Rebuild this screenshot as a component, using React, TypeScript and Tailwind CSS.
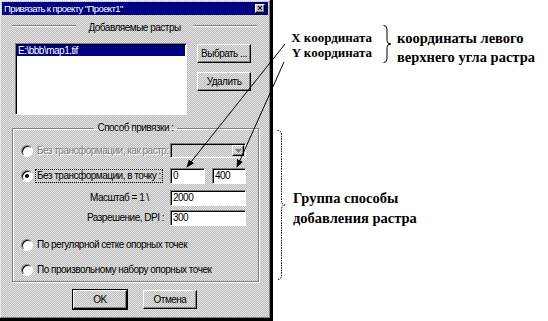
import React from 'react';

const field =
  'bg-white border border-t-[#808080] border-l-[#808080] border-r-white border-b-white shadow-[inset_1px_1px_0_#000]';
const raised =
  'border border-t-white border-l-white border-r-black border-b-black shadow-[inset_-1px_-1px_0_#808080]';
const dither =
  'bg-[#d0d0d0] bg-[repeating-conic-gradient(#bcbcbc_0%_25%,#e4e4e4_0%_50%)] bg-[length:2px_2px]';
const ui = 'text-[10px] tracking-[-0.5px]';

function Radio({ checked = false }: { checked?: boolean }) {
  return (
    <span className="w-[12px] h-[12px] rounded-full shrink-0 bg-white border border-t-[#808080] border-l-[#808080] border-r-white border-b-white shadow-[inset_1px_1px_0_#000] flex items-center justify-center">
      {checked && <span className="w-[4px] h-[4px] rounded-full bg-black" />}
    </span>
  );
}

function Button({ label, isDefault }: { label: string; isDefault?: boolean }) {
  return (
    <div className={`w-[54px] h-[19px] ${isDefault ? 'outline outline-1 outline-black' : ''}`}>
      <div className={`h-full ${raised} ${dither} flex items-center justify-center ${ui} leading-none text-black`}>
        {label}
      </div>
    </div>
  );
}

function Dialog() {
  return (
    <div className="w-[273px] h-[321px] shrink-0 border-r-[3px] border-b-[3px] border-black">
      <div className={`h-full border border-t-[#e8e8e8] border-l-[#e8e8e8] border-r-[#808080] border-b-[#808080] p-[1px] ${dither}`}>
        {/* title bar */}
        <div className="h-[13px] bg-[#000080] flex items-center justify-between pl-[2px] pr-[3px]">
          <span className="text-white text-[9.5px] tracking-[-0.6px] leading-none">Привязать к проекту "Проект1"</span>
          <span className={`w-[10px] h-[9px] ${raised} bg-[#c8c8c8] flex items-center justify-center text-[9px] leading-none font-bold text-black`}>
            ×
          </span>
        </div>

        {/* rasters header */}
        <div className="mt-[7px] h-[12px] flex items-start pl-[10px] pr-[11px] gap-[12px]">
          <div className="flex-1 mt-[3px] border-t border-t-[#808080] border-b border-b-white" />
          <span className={`${ui} leading-[12px] text-black`}>Добавляемые растры</span>
          <div className="flex-1 mt-[3px] border-t border-t-[#808080] border-b border-b-white" />
        </div>

        {/* list + buttons */}
        <div className="mt-[9px] flex pl-[13px]">
          <div className={`w-[172px] h-[72px] ${field} p-[1px]`}>
            <div className={`h-[11px] bg-[#000080] text-white ${ui} leading-[11px] pl-[1px]`}>
              {'E:\\bbb\\map1.tif'}
            </div>
          </div>
          <div className="ml-[10px] flex flex-col gap-[9px] pt-[1px]">
            <Button label="Выбрать ..." />
            <Button label="Удалить" />
          </div>
        </div>

        {/* group */}
        <fieldset className="mt-[7px] ml-[10px] w-[247px] border border-[#808080] shadow-[1px_1px_0_#fff,inset_1px_1px_0_#fff] pb-[5px]">
          <legend className={`mx-auto px-[3px] ${ui} leading-[12px] text-black`}>Способ привязки :</legend>

          <div className="mt-[9px] flex items-center">
            <div className="w-[157px] flex items-center pl-[8px] gap-[4px]">
              <Radio />
              <span className={`${ui} leading-none text-[#808080] [text-shadow:1px_1px_0_#fff] whitespace-nowrap`}>
                Без трансформации, как растр:
              </span>
            </div>
            <div className={`w-[76px] h-[15px] border border-t-[#808080] border-l-[#808080] border-r-white border-b-white shadow-[inset_1px_1px_0_#000] ${dither} flex justify-end p-[1px]`}>
              <div className={`w-[12px] h-full ${raised} ${dither} flex items-center justify-center`}>
                <svg width="7" height="4" viewBox="0 0 7 4">
                  <path d="M0 0h7L3.5 4z" fill="#808080" />
                </svg>
              </div>
            </div>
          </div>

          <div className="mt-[10px] flex items-center">
            <div className="w-[157px] flex items-center pl-[8px] gap-[3px]">
              <Radio checked />
              <span className={`${ui} leading-[12px] text-black whitespace-nowrap outline outline-1 outline-dotted outline-black px-[1px]`}>
                Без трансформации, в точку :
              </span>
            </div>
            <div className={`w-[35px] h-[16px] ${field} ${ui} leading-[14px] pl-[2px]`}>0</div>
            <div className={`ml-[7px] w-[34px] h-[16px] ${field} ${ui} leading-[14px] pl-[2px]`}>400</div>
          </div>

          <div className="mt-[6px] flex items-center">
            <div className={`w-[157px] pl-[77px] ${ui} leading-none text-black whitespace-nowrap`}>{'Масштаб = 1 \\'}</div>
            <div className={`w-[76px] h-[16px] ${field} ${ui} leading-[14px] pl-[2px]`}>2000</div>
          </div>

          <div className="mt-[4px] flex items-center">
            <div className={`w-[157px] pl-[74px] ${ui} leading-none text-black whitespace-nowrap`}>Разрешение, DPI :</div>
            <div className={`w-[76px] h-[16px] ${field} ${ui} leading-[14px] pl-[2px]`}>300</div>
          </div>

          <div className="mt-[13px] h-[12px] flex items-center pl-[8px] gap-[4px]">
            <Radio />
            <span className={`${ui} leading-none text-black whitespace-nowrap`}>По регулярной сетке опорных точек</span>
          </div>

          <div className="mt-[13px] h-[12px] flex items-center pl-[8px] gap-[4px]">
            <Radio />
            <span className={`${ui} leading-none text-black whitespace-nowrap`}>По произвольному набору опорных точек</span>
          </div>
        </fieldset>

        <div className="mt-[8px] flex pl-[71px] gap-[16px]">
          <Button label="OK" isDefault />
          <Button label="Отмена" />
        </div>
      </div>
    </div>
  );
}

function Annotations() {
  const serif = "font-['Liberation_Serif','Times_New_Roman',serif] font-bold text-black";
  return (
    <div className="flex-1 flex flex-col">
      <div className="mt-[25px] flex h-[38px]">
        <div className={`w-[99px] pt-[5px] flex flex-col items-end text-[13px] leading-[15px] ${serif}`}>
          <span>X координата</span>
          <span>Y координата</span>
        </div>
        <svg className="ml-[11px] shrink-0" width="9" height="38" viewBox="0 0 9 38">
          <path d="M0.5 0.5 Q4 0.5 4 4 V15.5 Q4 19 8 19 Q4 19 4 22.5 V34 Q4 37.5 0.5 37.5" fill="none" stroke="#000" strokeWidth="1" />
        </svg>
        <div className={`ml-[5px] pt-[4px] flex flex-col text-[14.5px] leading-[19px] whitespace-nowrap ${serif}`}>
          <span>координаты левого</span>
          <span>верхнего угла растра</span>
        </div>
      </div>

      <div className="mt-[67px] flex h-[150px]">
        <svg className="ml-[4px] shrink-0" width="9" height="150" viewBox="0 0 9 150">
          <path
            d="M0.5 0.5 Q4.5 0.5 4.5 5 V70 Q4.5 75 8 75 Q4.5 75 4.5 80 V145 Q4.5 149.5 0.5 149.5"
            fill="none"
            stroke="#000"
            strokeWidth="1"
            strokeDasharray="1.5 1"
          />
        </svg>
        <div className={`ml-[7px] pt-[58px] flex flex-col text-[14.5px] leading-[20px] whitespace-nowrap ${serif}`}>
          <span>Группа способы</span>
          <span>добавления растра</span>
        </div>
      </div>
    </div>
  );
}

export default function App() {
  return (
    <div className="relative w-[548px] h-[321px] bg-white flex overflow-hidden font-['Liberation_Sans',Arial,sans-serif]">
      <Dialog />
      <Annotations />
      <svg className="absolute inset-0 pointer-events-none" width="548" height="321" viewBox="0 0 548 321">
        <defs>
          <marker id="arr" viewBox="0 0 10 10" refX="9" refY="5" markerWidth="8" markerHeight="8" orient="auto">
            <path d="M0 1 L10 5 L0 9 z" fill="#000" />
          </marker>
        </defs>
        <line x1="285" y1="44" x2="187" y2="167" stroke="#000" strokeWidth="1" markerEnd="url(#arr)" />
        <line x1="284" y1="62" x2="237" y2="167" stroke="#000" strokeWidth="1" markerEnd="url(#arr)" />
      </svg>
    </div>
  );
}
